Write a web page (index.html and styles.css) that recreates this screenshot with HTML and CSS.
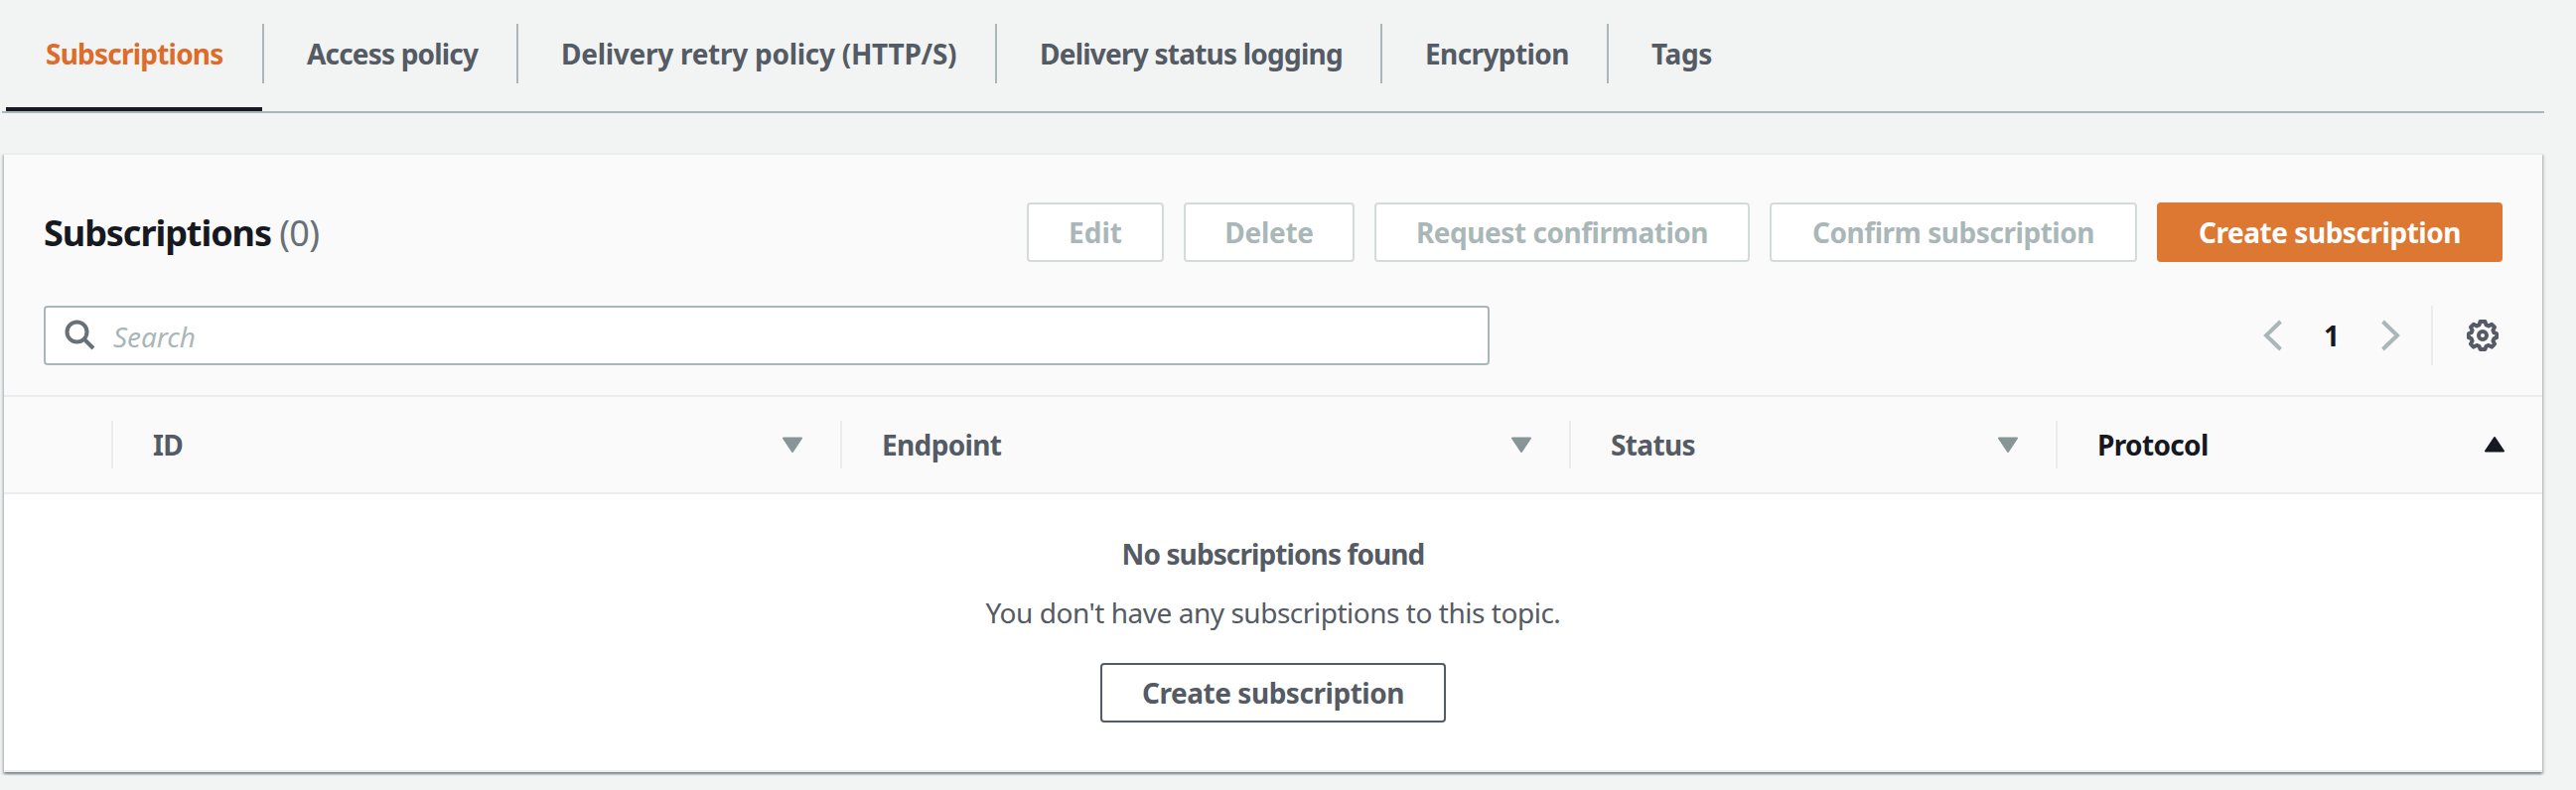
FILE: index.html
```html
<!DOCTYPE html>
<html lang="en">
<head>
<meta charset="utf-8">
<title>Subscriptions</title>
<link rel="stylesheet" href="styles.css">
</head>
<body>
<nav class="tabs">
  <a class="tab tab-subs active"><span>Subscriptions</span></a>
  <a class="tab tab-access"><span>Access policy</span></a>
  <a class="tab tab-retry"><span>Delivery retry policy (HTTP/S)</span></a>
  <a class="tab tab-logging"><span>Delivery status logging</span></a>
  <a class="tab tab-encryption"><span>Encryption</span></a>
  <a class="tab tab-tags"><span>Tags</span></a>
</nav>
<main class="card">
  <header class="card-header">
    <div class="title-row">
      <h2 class="title">Subscriptions <span class="count">(0)</span></h2>
      <div class="actions">
        <button class="btn disabled btn-edit">Edit</button>
        <button class="btn disabled btn-delete">Delete</button>
        <button class="btn disabled btn-request">Request confirmation</button>
        <button class="btn disabled btn-confirm">Confirm subscription</button>
        <button class="btn primary btn-create">Create subscription</button>
      </div>
    </div>
    <div class="filter-row">
      <div class="search">
        <svg class="search-icon" width="32" height="32" viewBox="0 0 32 32"><circle cx="12.5" cy="12.5" r="10" /><path d="M19.5 19.5L29 29" /></svg>
        <span class="placeholder">Search</span>
      </div>
      <div class="pager">
        <svg class="chevron" width="20" height="32" viewBox="0 0 20 32"><path d="M17.5 2L3 16l14.500 14" /></svg>
        <span class="page">1</span>
        <svg class="chevron" width="20" height="32" viewBox="0 0 20 32"><path d="M2.500 2L17 16L2.500 30" /></svg>
        <span class="rule"></span>
        <svg class="gear" width="32" height="32" viewBox="0 0 32 32"><path d="M13.5 2h5l1 3.500 2.500 1 3.200-1.700 2.800 2.900-1.600 3.200 1 2.300 2.600 1v4l-2.600 1-1 2.300 1.600 3.200-2.800 2.900-3.200-1.700-2.500 1-1 3h-5l-1-3-2.500-1-3.200 1.700L4 24.700l1.600-3.200-1-2.300-2.600-1v-4l2.600-1 1-2.300L4 7.700l2.800-2.900L10 6.500l2.500-1z" /><circle cx="16" cy="16" r="4" /></svg>
      </div>
    </div>
  </header>
  <div class="columns">
    <div class="col"></div>
    <div class="col">ID<svg class="sort" width="22" height="16" viewBox="0 0 22 16"><path d="M2 1.500h18L11 15z" /></svg></div>
    <div class="col">Endpoint<svg class="sort" width="22" height="16" viewBox="0 0 22 16"><path d="M2 1.500h18L11 15z" /></svg></div>
    <div class="col">Status<svg class="sort" width="22" height="16" viewBox="0 0 22 16"><path d="M2 1.500h18L11 15z" /></svg></div>
    <div class="col sorted">Protocol<svg class="sort" width="22" height="16" viewBox="0 0 22 16"><path d="M2 14.500h18L11 1z" /></svg></div>
  </div>
  <section class="empty">
    <strong class="empty-title">No subscriptions found</strong>
    <p class="empty-text">You don't have any subscriptions to this topic.</p>
    <button class="btn btn-create">Create subscription</button>
  </section>
</main>
</body>
</html>
```
FILE: styles.css
```css
* { box-sizing: border-box; }
body {
  margin: 0;
  height: 796px;
  overflow: hidden;
  background: #f2f3f3;
  color: #545b64;
  font: 400 28px/44px "Noto Sans", "Open Sans", sans-serif;
}
svg { display: block; flex: none; fill: none; }

.tabs {
  display: flex;
  width: 2560px;
  height: 114px;
  margin-left: 2px;
  padding-left: 4px;
  border-bottom: 2px solid #aab7b8;
}
.tab {
  display: flex;
  flex: none;
  height: 112px;
  padding-top: 24px;
  font-weight: 700;
  white-space: nowrap;
}
.tab span {
  flex: 1;
  height: 60px;
  padding-left: 43px;
  border-right: 2px solid #aab7b8;
  line-height: 60px;
}
.tab.active { color: #dd6b2a; position: relative; }
.tab.active::after {
  content: "";
  position: absolute;
  left: 0;
  right: 2px;
  bottom: 0;
  height: 4px;
  background: #16191f;
}
.tab.active span { padding-left: 40px; }
.tab-subs { width: 260px; letter-spacing: -.78px; }
.tab-access { width: 256px; letter-spacing: -.82px; }
.tab-retry { width: 482px; letter-spacing: -.27px; }
.tab-logging { width: 388px; letter-spacing: -.77px; }
.tab-encryption { width: 228px; letter-spacing: -.6px; }
.tab-tags { letter-spacing: -.4px; }
.tab-tags span { border-right: 0; }

.card {
  width: 2556px;
  height: 624px;
  margin: 40px 0 0 4px;
  background: #fff;
  border-top: 2px solid #eaeded;
  border-bottom: 2px solid #eaeded;
  box-shadow: 0 2px 2px 0 rgba(0, 28, 36, .3), 2px 2px 2px 0 rgba(0, 28, 36, .15), -2px 2px 2px 0 rgba(0, 28, 36, .15);
}
.card-header {
  height: 244px;
  padding: 48px 40px 0;
  background: #fafafa;
  border-bottom: 2px solid #eaeded;
}
.title-row, .filter-row { display: flex; justify-content: space-between; }
.title {
  height: 60px;
  margin: 0;
  color: #16191f;
  font-size: 36px;
  font-weight: 700;
  line-height: 62px;
  letter-spacing: -1.05px;
}
.count { color: #687078; font-weight: 400; letter-spacing: -.7px; }
.actions { display: flex; gap: 20px; }
.btn {
  height: 60px;
  padding: 0;
  background: #fff;
  border: 2px solid #545b64;
  border-radius: 4px;
  color: #545b64;
  font: 700 28px/56px "Noto Sans", "Open Sans", sans-serif;
  letter-spacing: -.46px;
  white-space: nowrap;
}
.btn.disabled { border-color: #d5dbdb; color: #aab7b8; }
.btn.primary { background: #dd7833; border-color: #dd7833; color: #fff; }
.btn-edit.disabled { width: 138px; letter-spacing: 0; }
.btn-delete.disabled { width: 172px; letter-spacing: -.3px; }
.btn-request { width: 378px; }
.btn-confirm { width: 370px; }
.btn-create { width: 348px; }

.filter-row { margin-top: 44px; }
.search {
  display: flex;
  align-items: center;
  width: 1456px;
  height: 60px;
  padding-left: 19px;
  background: #fff;
  border: 2px solid #aab7b8;
  border-radius: 4px;
}
.search-icon { stroke: #687078; stroke-width: 4; }
.placeholder {
  margin: 2px 0 0 17px;
  color: #aab7b8;
  font-style: italic;
  letter-spacing: -.1px;
}
.pager { display: flex; align-items: center; height: 60px; padding-right: 4px; }
.chevron { stroke: #aab7b8; stroke-width: 4; }
.page {
  width: 98px;
  color: #16191f;
  font-weight: 700;
  text-align: center;
}
.rule { width: 2px; height: 60px; margin: 0 34px 0 31px; background: #eaeded; }
.gear { stroke: #545b64; stroke-width: 4; stroke-linejoin: round; }

.columns {
  display: grid;
  grid-template-columns: 110px 734px 734px 490px 488px;
  height: 98px;
  padding: 24px 0;
  background: #fafafa;
  border-bottom: 2px solid #eaeded;
}
.col {
  display: flex;
  align-items: center;
  justify-content: space-between;
  height: 48px;
  padding: 0 37px 0 40px;
  border-right: 2px solid #eaeded;
  font-weight: 700;
  letter-spacing: -.65px;
}
.sort { fill: #879596; stroke: #879596; stroke-width: 2; stroke-linejoin: round; }
.sorted { border-right: 0; color: #16191f; }
.sorted .sort { fill: #16191f; stroke: #16191f; }

.empty {
  display: flex;
  flex-direction: column;
  align-items: center;
  padding-top: 38px;
}
.empty-title { font-weight: 700; letter-spacing: -.9px; }
.empty-text { margin: 15px 0 29px; letter-spacing: -.47px; }
```
